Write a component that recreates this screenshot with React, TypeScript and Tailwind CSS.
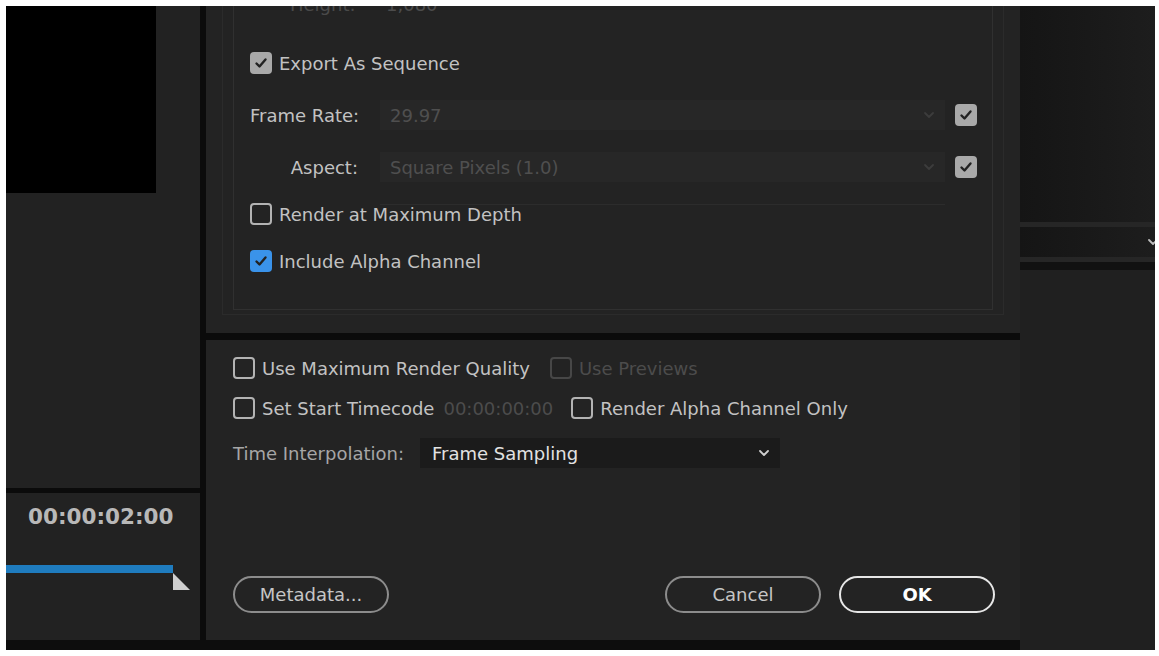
import React from 'react';

type BoxKind = 'gray' | 'blue' | 'off' | 'disabled';

function CheckBox({ kind }: { kind: BoxKind }) {
  if (kind === 'gray' || kind === 'blue') {
    const bg = kind === 'gray' ? 'bg-[#a9a9a9]' : 'bg-[#3a93ea]';
    return (
      <span className={`flex h-[22px] w-[22px] shrink-0 items-center justify-center rounded-[4px] ${bg}`}>
        <svg width="16" height="16" viewBox="0 0 16 16" fill="none">
          <path d="M3.5 8.5l3 3L12.5 4.5" stroke="#222" strokeWidth="2.4" strokeLinecap="round" strokeLinejoin="round" />
        </svg>
      </span>
    );
  }
  const border = kind === 'off' ? 'border-[#b3b3b3]' : 'border-[#474747]';
  return <span className={`block h-[22px] w-[22px] shrink-0 rounded-[4px] border-2 ${border}`} />;
}

function Chevron({ color }: { color: string }) {
  return (
    <svg width="12" height="8" viewBox="0 0 12 8" fill="none">
      <path d="M2 2l4 4 4-4" stroke={color} strokeWidth="1.8" strokeLinecap="round" strokeLinejoin="round" />
    </svg>
  );
}

function FieldRow({ label, value }: { label: string; value: string }) {
  return (
    <div className="flex h-[30px] items-center">
      <span className="w-[108px] whitespace-nowrap text-right text-[#c2c2c2]">{label}</span>
      <div className="ml-[22px] flex h-[30px] w-[565px] items-center justify-between bg-[#272727] pl-[10px] pr-[10px]">
        <span className="text-[#4f4f4f]">{value}</span>
        <Chevron color="#3c3c3c" />
      </div>
      <span className="ml-[10px]">
        <CheckBox kind="gray" />
      </span>
    </div>
  );
}

function CheckRow({ kind, label }: { kind: BoxKind; label: string }) {
  return (
    <div className="flex h-[24px] items-center gap-[7px] whitespace-nowrap">
      <CheckBox kind={kind} />
      <span className="text-[#c2c2c2]">{label}</span>
    </div>
  );
}

function PillButton({ label, primary }: { label: string; primary?: boolean }) {
  const cls = primary
    ? 'border-[#e6e6e6] text-white font-bold'
    : 'border-[#8c8c8c] text-[#c6c6c6]';
  return (
    <button className={`flex h-[37px] w-[156px] items-center justify-center rounded-full border-2 text-[18px] ${cls}`}>
      {label}
    </button>
  );
}

function LeftPanel() {
  return (
    <div className="flex h-[634px] w-[194px] flex-col bg-[#222222]">
      <div className="h-[187px] w-[150px] bg-black" />
      <div className="flex-1" />
      <div className="h-[5px] bg-[#0b0b0b]" />
      <div className="flex h-[147px] flex-col">
        <div className="mt-[8px] pl-[22px] text-[21.5px] font-bold text-[#b8b8b8]">00:00:02:00</div>
        <div className="mt-[32px] h-[8px] w-[167px] bg-[#1f7cbf]" />
        <svg className="ml-[167px]" width="18" height="18" viewBox="0 0 18 18">
          <path d="M0 0L17 17H0Z" fill="#cfcfcf" />
        </svg>
      </div>
    </div>
  );
}

function ExportDialog() {
  return (
    <div className="flex h-[634px] w-[814px] flex-col">
      <div className="h-[327px] overflow-hidden bg-[#232323] px-[16px]">
        <div className="h-[309px] border-x border-b border-[#2b2b2b] px-[10px]">
          <div className="flex h-[304px] flex-col border-x border-b border-[#303030] pl-[16px] pr-[15px]">
            <div className="-mt-[14px] flex h-[24px] shrink-0 items-center text-[#4c4c4c]">
              <span className="w-[108px] pl-[40px] text-[#4a4a4a]">Height:</span>
              <span className="ml-[28px]">1,080</span>
            </div>
            <div className="mt-[35px]">
              <CheckRow kind="gray" label="Export As Sequence" />
            </div>
            <div className="mt-[25px]">
              <FieldRow label="Frame Rate:" value="29.97" />
            </div>
            <div className="mt-[22px]">
              <FieldRow label="Aspect:" value="Square Pixels (1.0)" />
            </div>
            <div className="ml-[130px] mt-[22px] h-px w-[565px] shrink-0 bg-[#2c2c2c]" />
            <div className="-mt-[3px]">
              <CheckRow kind="off" label="Render at Maximum Depth" />
            </div>
            <div className="mt-[23px]">
              <CheckRow kind="blue" label="Include Alpha Channel" />
            </div>
          </div>
        </div>
      </div>
      <div className="h-[7px] bg-[#0b0b0b]" />
      <div className="flex flex-1 flex-col bg-[#232323] pl-[27px] pr-[25px]">
        <div className="mt-[16px] flex h-[24px] items-center">
          <CheckRow kind="off" label="Use Maximum Render Quality" />
          <div className="ml-[20px] flex items-center gap-[7px]">
            <CheckBox kind="disabled" />
            <span className="text-[#4c4c4c]">Use Previews</span>
          </div>
        </div>
        <div className="mt-[16px] flex h-[24px] items-center whitespace-nowrap">
          <CheckRow kind="off" label="Set Start Timecode" />
          <span className="ml-[9px] text-[#4c4c4c]">00:00:00:00</span>
          <div className="ml-[18px]">
            <CheckRow kind="off" label="Render Alpha Channel Only" />
          </div>
        </div>
        <div className="mt-[18px] flex h-[30px] items-center">
          <span className="w-[187px] whitespace-nowrap text-[#a6a6a6]">Time Interpolation:</span>
          <div className="flex h-[30px] w-[360px] items-center justify-between bg-[#1b1b1b] pl-[12px] pr-[10px]">
            <span className="text-[#e2e2e2]">Frame Sampling</span>
            <Chevron color="#cfcfcf" />
          </div>
        </div>
        <div className="flex-1" />
        <div className="mb-[27px] flex items-center">
          <PillButton label="Metadata..." />
          <div className="flex-1" />
          <div className="flex gap-[18px]">
            <PillButton label="Cancel" />
            <PillButton label="OK" primary />
          </div>
        </div>
      </div>
    </div>
  );
}

function RightStrip() {
  return (
    <div className="flex h-[644px] flex-1 flex-col bg-gradient-to-r from-[#151515] to-[#1d1d1d]">
      <div className="h-[216px]" />
      <div className="h-[5px] bg-[#262626]" />
      <div className="flex h-[30px] items-center justify-end">
        <span className="-mr-[4px]">
          <Chevron color="#bdbdbd" />
        </span>
      </div>
      <div className="h-[5px] bg-[#262626]" />
      <div className="h-[8px] bg-[#111111]" />
      <div className="flex-1 bg-[#202020]" />
    </div>
  );
}

export default function App() {
  return (
    <div className="h-[656px] w-[1159px] overflow-hidden bg-white pl-[6px] pr-[4px] pt-[6px] font-['DejaVu_Sans',sans-serif] text-[18px]">
      <div className="flex h-[644px] overflow-hidden">
        <div className="flex h-[644px] flex-col bg-[#0d0d0d]">
          <div className="flex">
            <LeftPanel />
            <div className="w-[6px] bg-[#0b0b0b]" />
            <ExportDialog />
          </div>
        </div>
        <RightStrip />
      </div>
    </div>
  );
}
